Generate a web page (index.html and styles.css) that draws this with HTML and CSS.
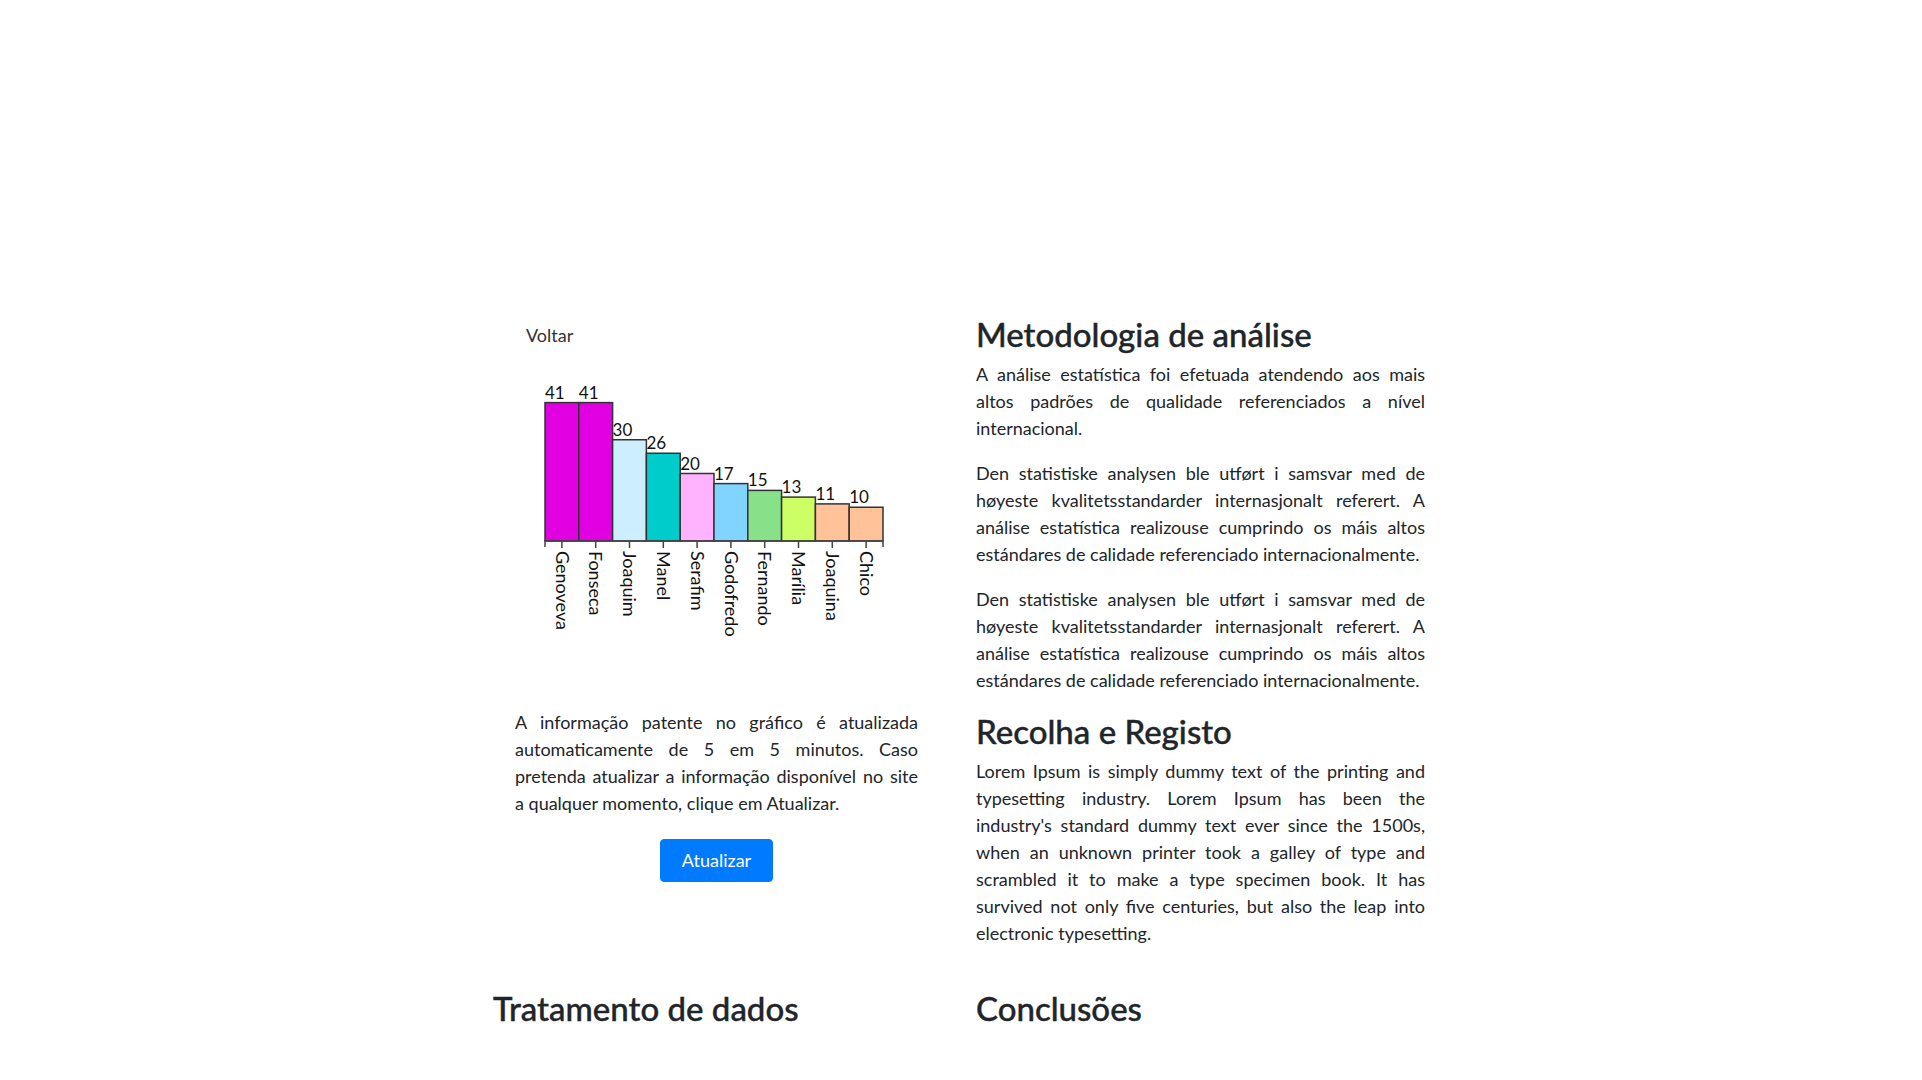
FILE: index.html
```html
<!DOCTYPE html>
<html lang="pt">
<head>
<meta charset="utf-8">
<title>Gráfico</title>
<link rel="stylesheet" href="styles.css">
</head>
<body>
<main class="page">
  <div class="container">
    <div class="row">
      <section class="col col-left">
        <a class="back" href="#">Voltar</a>
        <svg class="chart" width="420" height="300" viewBox="0 0 420 300">
          <g class="bars">
            <rect x="52" y="51.6" width="33.8" height="138.4" fill="#e100e1"/>
            <rect x="85.8" y="51.6" width="33.8" height="138.4" fill="#e100e1"/>
            <rect x="119.6" y="88.75" width="33.8" height="101.25" fill="#cceeff"/>
            <rect x="153.4" y="102.25" width="33.8" height="87.75" fill="#00cccc"/>
            <rect x="187.2" y="122.5" width="33.8" height="67.5" fill="#ffb3ff"/>
            <rect x="221" y="132.6" width="33.8" height="57.4" fill="#80d4ff"/>
            <rect x="254.8" y="139.4" width="33.8" height="50.6" fill="#88e088"/>
            <rect x="288.6" y="146.1" width="33.8" height="43.9" fill="#ccff66"/>
            <rect x="322.4" y="152.9" width="33.8" height="37.1" fill="#ffc299"/>
            <rect x="356.2" y="156.25" width="33.8" height="33.75" fill="#ffc299"/>
          </g>
          <g class="values">
            <text x="52" y="47.6">41</text>
            <text x="85.8" y="47.6">41</text>
            <text x="119.6" y="84.75">30</text>
            <text x="153.4" y="98.25">26</text>
            <text x="187.2" y="118.5">20</text>
            <text x="221" y="128.6">17</text>
            <text x="254.8" y="135.4">15</text>
            <text x="288.6" y="142.1">13</text>
            <text x="322.4" y="148.9">11</text>
            <text x="356.2" y="152.25">10</text>
          </g>
          <g class="axis">
            <path d="M52,196V190H390V196"/>
            <path d="M68.9,190v7M102.7,190v7M136.5,190v7M170.3,190v7M204.1,190v7M237.9,190v7M271.7,190v7M305.5,190v7M339.3,190v7M373.1,190v7"/>
          </g>
          <g class="labels">
            <text transform="translate(68.9,200) rotate(90)" dy="0.35em">Genoveva</text>
            <text transform="translate(102.7,200) rotate(90)" dy="0.35em">Fonseca</text>
            <text transform="translate(136.5,200) rotate(90)" dy="0.35em">Joaquim</text>
            <text transform="translate(170.3,200) rotate(90)" dy="0.35em">Manel</text>
            <text transform="translate(204.1,200) rotate(90)" dy="0.35em">Serafim</text>
            <text transform="translate(237.9,200) rotate(90)" dy="0.35em">Godofredo</text>
            <text transform="translate(271.7,200) rotate(90)" dy="0.35em">Fernando</text>
            <text transform="translate(305.5,200) rotate(90)" dy="0.35em">Marília</text>
            <text transform="translate(339.3,200) rotate(90)" dy="0.35em">Joaquina</text>
            <text transform="translate(373.1,200) rotate(90)" dy="0.35em">Chico</text>
          </g>
        </svg>
        <div class="info">
          <p class="info-text">A informação patente no gráfico é atualizada automaticamente de 5 em 5 minutos. Caso pretenda atualizar a informação disponível no site a qualquer momento, clique em Atualizar.</p>
          <button class="btn" type="button">Atualizar</button>
        </div>
      </section>
      <section class="col col-right">
        <h2 class="title">Metodologia de análise</h2>
        <p>A análise estatística foi efetuada atendendo aos mais altos padrões de qualidade referenciados a nível internacional.</p>
        <p>Den statistiske analysen ble utført i samsvar med de høyeste kvalitetsstandarder internasjonalt referert. A análise estatística realizouse cumprindo os máis altos estándares de calidade referenciado internacionalmente.</p>
        <p>Den statistiske analysen ble utført i samsvar med de høyeste kvalitetsstandarder internasjonalt referert. A análise estatística realizouse cumprindo os máis altos estándares de calidade referenciado internacionalmente.</p>
        <h2 class="title">Recolha e Registo</h2>
        <p class="last">Lorem Ipsum is simply dummy text of the printing and typesetting industry. Lorem Ipsum has been the industry's standard dummy text ever since the 1500s, when an unknown printer took a galley of type and scrambled it to make a type specimen book. It has survived not only five centuries, but also the leap into electronic typesetting.</p>
      </section>
    </div>
    <div class="row row-second">
      <section class="col"><h2 class="title">Tratamento de dados</h2></section>
      <section class="col"><h2 class="title">Conclusões</h2></section>
    </div>
  </div>
</main>
</body>
</html>
```
FILE: styles.css
```css
html, body {
  margin: 0;
  padding: 0;
  background: #fff;
}
body {
  font-family: "Lato", "Liberation Sans", sans-serif;
  font-size: 18px;
  line-height: 27px;
  color: #212529;
}
.page {
  padding-top: 315px;
}
.container {
  width: 932px;
  padding-right: 4px;
  margin: 0 auto;
}
.row {
  display: grid;
  grid-template-columns: 453px 449px;
  column-gap: 30px;
}
.row-second {
  margin-top: 42px;
}
.col-left {
  display: flex;
  flex-direction: column;
  align-items: flex-start;
}
.back {
  margin-top: 7px;
  margin-left: 33px;
  color: #333;
  text-decoration: none;
}
.chart {
  display: block;
  margin-top: 2px;
}
.chart .bars rect {
  stroke: #333;
  stroke-width: 1.5;
}
.chart .values text {
  font-size: 17px;
  fill: #111;
}
.chart .axis path {
  fill: none;
  stroke: #444;
  stroke-width: 1.5;
}
.chart .labels text {
  font-size: 18px;
  fill: #111;
}
.info {
  margin-left: 22px;
  width: 403px;
  margin-top: 58px;
  text-align: center;
}
.info-text {
  margin: 0 0 22px;
  text-align: justify;
}
.btn {
  font-family: inherit;
  font-size: 18px;
  line-height: 27px;
  padding: 7px 21px;
  color: #fff;
  background: #007bff;
  border: 1px solid #007bff;
  border-radius: 4px;
}
.col-right p {
  margin: 0 0 18px;
  text-align: justify;
}
.col-right p.last {
  margin-bottom: 0;
}
.title {
  margin: 0 0 8px;
  font-size: 33px;
  line-height: 38px;
  font-weight: 500;
  color: #212529;
  -webkit-text-stroke: 0.4px #212529;
}
```
